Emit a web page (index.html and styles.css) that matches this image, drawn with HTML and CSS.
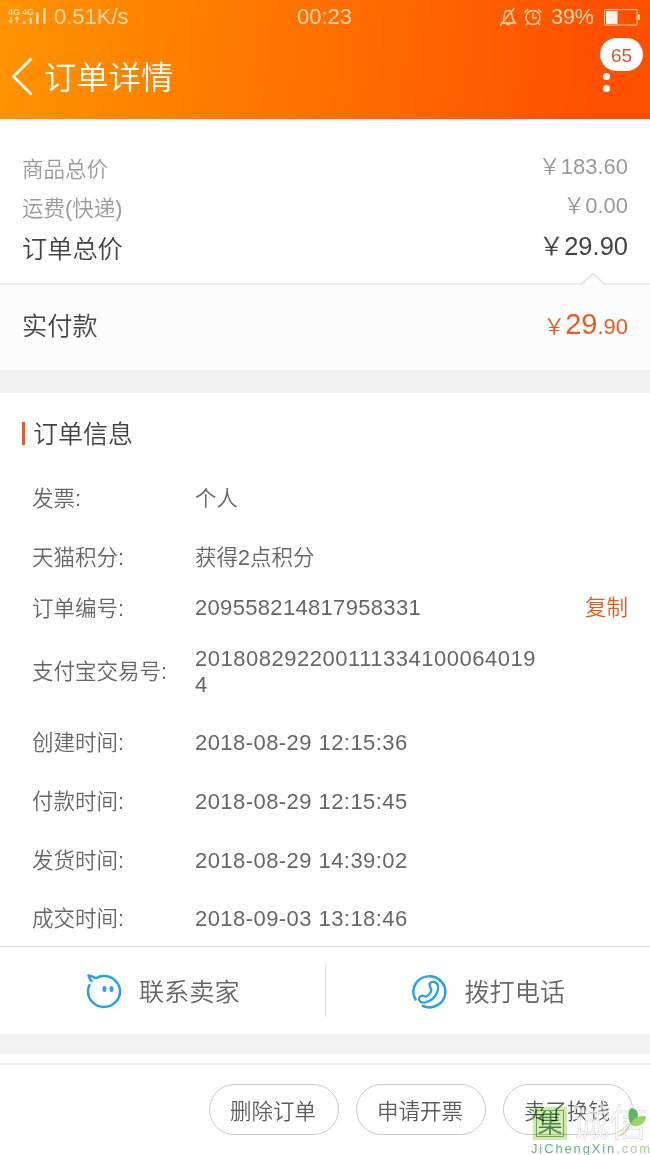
FILE: index.html
```html
<!DOCTYPE html>
<html lang="zh-CN">
<head>
<meta charset="utf-8">
<title>订单详情</title>
<link rel="stylesheet" href="styles.css">
</head>
<body>
<div class="screen">
  <header class="header">
    <div class="status">
      <div class="status-left">
        <svg class="signal" width="40" height="18" viewBox="0 0 40 18">
          <text class="signal-text" x="0" y="6.5" textLength="12" lengthAdjust="spacingAndGlyphs">4G</text>
          <text class="signal-text" x="14" y="6.5" textLength="12" lengthAdjust="spacingAndGlyphs">4G</text>
          <path d="M3 9v6M1 12.500l2 2 2-2M9 15V9M7 11l2-2 2 2" fill="none" stroke="currentColor" stroke-width="1.2"/>
          <path d="M15 13h3v3h-3zM21.5 9.500h2.500v6.500h-2.500zM28 4.500h2.500v11.500h-2.500zM35 0h2.500v16h-2.500z" fill="currentColor"/>
        </svg>
        <span>0.51K/s</span>
      </div>
      <span class="clock">00:23</span>
      <div class="status-right">
        <svg width="18" height="20" viewBox="0 0 18 20" fill="none" stroke="currentColor" stroke-width="1.3">
          <path d="M4 13.500c1.500-2 .8-5.500 2-8C6.600 4 8 3.500 9 3.500c1.800 0 3.500 1.200 3.800 3.500.3 3 .2 6 3.700 9H2M7.500 16.500c.5 1.800 3 1.800 3.500 0M15.500 1 1 18.500"/>
        </svg>
        <svg width="20" height="20" viewBox="0 0 20 20" fill="none" stroke="currentColor" stroke-width="1.4">
          <circle cx="10" cy="10.500" r="7"/><path d="M10 6v5h4M1.500 5.500 5 2M18.500 5.500 15 2M5 16l-2 2M15 16l2 2"/>
        </svg>
        <span class="percent">39%</span>
        <svg class="battery" width="37" height="17" viewBox="0 0 37 17">
          <rect x=".6" y=".6" width="32.500" height="15.500" rx="1" fill="none" stroke="currentColor"/>
          <path d="M2 2h11.500v13H2z" fill="#fff3ea"/><path d="M34 5h2v6h-2z" fill="currentColor"/>
        </svg>
      </div>
    </div>
    <div class="nav">
      <svg class="back" width="22" height="40" viewBox="0 0 22 40"><path d="M20.500 1.500 2.500 19.500l18 18" fill="none" stroke="#fff" stroke-width="2.600"/></svg>
      <h1 class="title">订单详情</h1>
      <div class="more"><span class="badge">65</span><i class="dot"></i><i class="dot"></i></div>
    </div>
  </header>

  <section class="summary">
    <div class="sum-row"><span>商品总价</span><span class="num">￥183.60</span></div>
    <div class="sum-row"><span>运费(快递)</span><span class="num">￥0.00</span></div>
    <div class="sum-row total"><span>订单总价</span><span class="num">￥29.90</span></div>
  </section>
  <section class="paid">
    <svg class="notch" width="26" height="14" viewBox="0 0 26 14"><path d="M1 13 13 1.500 25 13v1H1z" fill="#fcfcfc"/><path d="M1 12.500 13 1.500l12 11" fill="none" stroke="#e0e0e0" stroke-width="1.300"/></svg>
    <span class="paid-label">实付款</span>
    <span class="paid-num">￥<b class="big">29</b>.90</span>
  </section>
  <div class="gap gap-top"></div>

  <section class="info">
    <h2 class="info-title"><span>订单信息</span></h2>
    <div class="row h58"><span class="label">发票:</span><span>个人</span></div>
    <div class="row h60"><span class="label">天猫积分:</span><span>获得2点积分</span></div>
    <div class="row h42"><span class="label">订单编号:</span><span class="value">209558214817958331</span><a class="copy">复制</a></div>
    <div class="row h84"><span class="label">支付宝交易号:</span><span class="value long">2018082922001113341000640194</span></div>
    <div class="row h58"><span class="label">创建时间:</span><span class="value date">2018-08-29 12:15:36</span></div>
    <div class="row h59"><span class="label">付款时间:</span><span class="value date">2018-08-29 12:15:45</span></div>
    <div class="row h59"><span class="label">发货时间:</span><span class="value date">2018-08-29 14:39:02</span></div>
    <div class="row h57"><span class="label">成交时间:</span><span class="value date">2018-09-03 13:18:46</span></div>
  </section>

  <section class="contact">
    <div class="contact-item">
      <svg width="36" height="36" viewBox="0 0 36 36" fill="none" stroke="#27a3e0" stroke-width="2.500" stroke-linecap="round" stroke-linejoin="round">
        <path d="M3.500 12C2.300 14 2 16 2 18.500A16 15.500 0 1 0 18 3c-3 0-5.500.6-8 2.200C7.500 4 5 3 2.500 2.500c.5 2 1.500 4 3 5.500"/>
        <path d="M18.500 15v2M25.500 15v2" stroke-width="3.800"/>
      </svg>
      <span>联系卖家</span>
    </div>
    <div class="contact-item">
      <svg width="36" height="36" viewBox="0 0 36 36" fill="none" stroke="#27a3e0" stroke-width="2.500" stroke-linecap="round" stroke-linejoin="round">
        <path d="M4.500 26.500A16 15.500 0 1 1 12 33"/>
        <path d="M19 13.500c-1.500-3 1-5 4-4.500 4 .7 5 5 3.500 9.500C24.500 24 20 28 14 29.500c-3.500.8-6-.7-6-3.500s3-4.200 5.500-2.700c1.500.7 2.500.2 4-1.300 2-2 3-3.200 2.800-5-.1-1.300-.8-2-1.300-3.500z" stroke-width="2.300"/>
      </svg>
      <span>拨打电话</span>
    </div>
  </section>
  <div class="gap gap-bottom"></div>

  <footer class="actions">
    <button class="btn">删除订单</button>
    <button class="btn">申请开票</button>
    <button class="btn">卖了换钱</button>
  </footer>

  <div class="watermark">
    <div class="mark-top">
      <span class="mark-box">集</span>
      <span class="mark-name">诚信</span>
      <svg class="leaf" width="28" height="32" viewBox="0 0 28 32"><path d="M1 29c5-3 8-7 11-13" fill="none" stroke="#b5dc94" stroke-width="1.500"/><path d="M12 1c6 1 8 5 6.500 10L12 17C9 12 8 5 12 1z" fill="#62b568"/><path d="M12 18c1-6 6-9.500 15-9C27 16 20 21 12 18z" fill="#9bd267"/></svg>
    </div>
    <svg class="mark-url" width="122" height="16" viewBox="0 0 122 16"><text x="1" y="13" textLength="119"><tspan fill="#62b47c">JiChengXin</tspan><tspan fill="#a6d38b">.com</tspan></text></svg>
  </div>
</div>
</body>
</html>
```
FILE: styles.css
```css
* { box-sizing: border-box; }
body {
  margin: 0;
  background: #fff;
  font-family: "Liberation Sans", "Noto Sans CJK SC DemiLight", "Noto Sans CJK SC", sans-serif;
  color: #666;
}
.screen {
  position: relative;
  width: 650px;
  height: 1155px;
  overflow: hidden;
  font-size: 21.5px;
}
.header {
  height: 119px;
  background: linear-gradient(97deg, #ff9400 0%, #ff5000 92%);
  color: #fff;
}
.status {
  display: grid;
  grid-template-columns: 1fr auto 1fr;
  align-items: center;
  height: 34px;
  padding: 0 9px 0 8px;
  font-size: 22px;
  color: #ffd9b0;
}
.status-left, .status-right { display: flex; align-items: center; }
.status-left { gap: 6px; }
.status-right { justify-content: flex-end; gap: 6px; }
.signal-text { font-size: 8.5px; font-weight: bold; fill: currentColor; }
.percent { margin-left: 2px; font-size: 21.5px; }
.battery { margin-left: 4px; }
.nav {
  display: flex;
  align-items: center;
  height: 85px;
  padding: 0 0 0 11px;
}
.title {
  margin: 3px 0 0 11px;
  font-size: 32.3px;
  font-weight: 400;
  line-height: 40px;
}
.more {
  display: flex;
  flex-direction: column;
  width: 43px;
  height: 85px;
  margin: 0 7px 0 auto;
  padding-top: 4px;
}
.badge {
  height: 33px;
  margin-bottom: 2px;
  border-radius: 17px;
  background: #fff;
  color: #d9582b;
  font-size: 19px;
  line-height: 35px;
  text-align: center;
}
.dot { width: 7px; height: 7px; margin: 0 0 5px 3px; border-radius: 50%; background: #fff; }
.summary { height: 164px; padding: 31px 22px 0; color: #999; }
.sum-row { display: flex; justify-content: space-between; align-items: center; height: 39px; line-height: 38px; }
.num { padding-bottom: 6px; font-size: 22px; }
.total { height: 42px; font-size: 25.2px; color: #444; }
.total .num { padding-bottom: 6px; font-size: 25.5px; }
.paid {
  position: relative;
  display: flex;
  justify-content: space-between;
  align-items: center;
  height: 87px;
  padding: 0 22px 8px;
  border-top: 2px solid #eee;
  background: #fcfcfc;
}
.notch { position: absolute; top: -13px; right: 44px; }
.paid-label { font-size: 25.2px; color: #444; }
.paid-num { padding-top: 2px; font-size: 22px; color: #ea5a1c; }
.big { font-size: 29px; font-weight: 400; }
.gap { background: #f1f1f1; }
.gap-top { height: 23px; }
.gap-bottom { height: 20px; background: #f3f3f3; }
.info { height: 553px; padding: 4px 22px 0; }
.info-title {
  display: flex;
  align-items: center;
  height: 72px;
  margin: 0;
  font-size: 25px;
  font-weight: 400;
  line-height: 36px;
  color: #444;
}
.info-title span { padding-top: 2px; }
.info-title::before { content: ""; width: 3px; height: 23px; margin-right: 8px; background: #f0581a; }
.row { display: flex; align-items: center; padding: 2px 0 0 10px; line-height: 30px; }
.label { flex: 0 0 163px; white-space: nowrap; }
.value { font-size: 22px; letter-spacing: .32px; }
.h42 .value, .copy { padding-bottom: 2px; }
.date { letter-spacing: .44px; }
.long { width: 349px; letter-spacing: .52px; line-height: 26px; word-break: break-all; }
.copy { margin-left: auto; color: #f0581a; }
.h42 { height: 42px; }
.h57 { height: 57px; }
.h58 { height: 58px; }
.h59 { height: 59px; }
.h60 { height: 60px; }
.h84 { height: 84px; }
.contact {
  display: flex;
  align-items: center;
  height: 88px;
  border-top: 1px solid #ddd;
  font-size: 25.2px;
  line-height: 36px;
}
.contact-item { display: flex; flex: 1; align-items: center; justify-content: center; gap: 17px; height: 52px; padding-left: 1px; }
.contact-item span { padding-top: 3px; }
.contact-item + .contact-item { border-left: 1px solid #ddd; }
.actions {
  display: flex;
  justify-content: flex-end;
  gap: 17px;
  height: 92px;
  margin-top: 9px;
  padding: 19px 17px 0 0;
  border-top: 2px solid #eee;
}
.btn {
  width: 130px;
  height: 51px;
  padding: 0 2px 1px 0;
  border: 1px solid #c8c8c8;
  border-radius: 26px;
  background: #fff;
  color: #5c5c5c;
  font: inherit;
}
.watermark { position: absolute; left: 530px; top: 1107px; width: 120px; }
.mark-top { display: flex; height: 33px; padding-left: 3px; gap: 4px; }
.mark-box {
  width: 34px;
  height: 33px;
  border: 3px solid #cdeba4;
  outline: 1px solid #6ca862;
  outline-offset: -4px;
  background: #d3eeb0;
  color: #46804d;
  font-size: 25px;
  line-height: 26px;
  text-align: center;
  mix-blend-mode: multiply;
}
.mark-name {
  color: rgba(255, 255, 255, .65);
  -webkit-text-stroke: .6px #d6d6d6;
  font-size: 38px;
  line-height: 32px;
  white-space: nowrap;
}
.leaf { position: absolute; left: 89px; top: 0; }
.mark-url { display: block; font-size: 13px; }
```
